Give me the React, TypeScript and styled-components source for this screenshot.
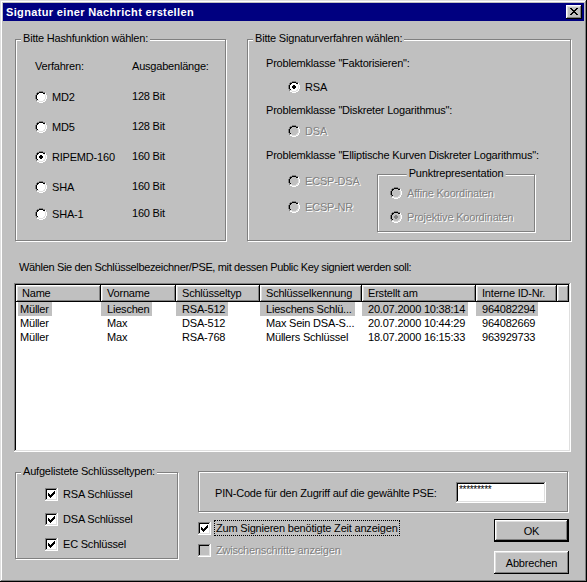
import styled, { createGlobalStyle, css } from "styled-components";

const FACE = "#c0c0c0";

const GlobalStyle = createGlobalStyle`
  * { box-sizing: border-box; }
  html, body { margin: 0; padding: 0; background: ${FACE}; }
  body {
    font-family: "Liberation Sans", Arial, sans-serif;
    font-size: 11px;
    line-height: 14px;
    letter-spacing: -0.2px;
    color: #000;
  }
`;

const raised = css`
  box-shadow: inset -1px -1px #000, inset 1px 1px #fff, inset -2px -2px #808080,
    inset 2px 2px #dfdfdf;
`;

const sunken = css`
  box-shadow: inset -1px -1px #fff, inset 1px 1px #808080, inset -2px -2px #dfdfdf,
    inset 2px 2px #000;
`;

const Window = styled.div`
  width: 587px;
  height: 582px;
  padding: 3px;
  background: ${FACE};
  box-shadow: inset -1px -1px #000, inset 1px 1px #dfdfdf, inset -2px -2px #808080,
    inset 2px 2px #fff;
  display: flex;
  flex-direction: column;
`;

const TitleBar = styled.div`
  height: 18px;
  flex-shrink: 0;
  background: #000080;
  color: #fff;
  font-weight: bold;
  letter-spacing: 0.35px;
  display: flex;
  align-items: center;
  padding: 0 2px 0 3px;
`;

const TitleText = styled.span`
  flex: 1;
  white-space: nowrap;
`;

const CloseButton = styled.div`
  width: 16px;
  height: 14px;
  background: ${FACE};
  ${raised};
  padding: 3px 0 0 4px;
`;

const Pix = styled.svg`
  display: block;
  flex-shrink: 0;
`;

function PixelArt({ map, colors }: { map: string[]; colors: Record<string, string> }) {
  const w = map[0].length;
  const h = map.length;
  return (
    <Pix width={w} height={h} viewBox={`0 0 ${w} ${h}`} shapeRendering="crispEdges">
      {map.flatMap((row, y) =>
        [...row].map((c, x) =>
          colors[c] ? (
            <rect key={`${x}-${y}`} x={x} y={y} width={1} height={1} fill={colors[c]} />
          ) : null
        )
      )}
    </Pix>
  );
}

const CLOSE_X = [
  "KK....KK",
  ".KK..KK.",
  "..KKKK..",
  "...KK...",
  "..KKKK..",
  ".KK..KK.",
  "KK....KK",
];

const RADIO_MAP = [
  "....GGGG....",
  "..GGKKKKGG..",
  ".GKKFFFFKKW.",
  ".GKFFFFFFLW.",
  "GKFFFDDFFFLW",
  "GKFFDDDDFFLW",
  "GKFFDDDDFFLW",
  "GKFFFDDFFFLW",
  ".GKFFFFFFLW.",
  ".GLLFFFFLLW.",
  "..WWLLLLWW..",
  "....WWWW....",
];

// 13x13 sunken check box with the classic 7x7 tick
const CHECK_MAP = (() => {
  const rows: string[][] = [];
  for (let y = 0; y < 13; y++) {
    const r: string[] = [];
    for (let x = 0; x < 13; x++) {
      if (x === 12 || y === 12) r.push("W");
      else if (x === 0 || y === 0) r.push("G");
      else if (x === 11 || y === 11) r.push("L");
      else if (x === 1 || y === 1) r.push("K");
      else r.push("F");
    }
    rows.push(r);
  }
  const tick: [number, number][] = [[3, 5], [4, 6], [5, 7], [6, 6], [7, 5], [8, 4], [9, 3]];
  tick.forEach(([x, y0]) => {
    for (let y = y0; y < y0 + 3; y++) rows[y][x] = "C";
  });
  return rows.map((r) => r.join(""));
})();

const Label = styled.span<{ $disabled?: boolean }>`
  white-space: nowrap;
  ${(p) =>
    p.$disabled &&
    css`
      color: #808080;
      text-shadow: 1px 1px 0 #fff;
    `}
`;

const Option = styled.div<{ $gap?: number }>`
  display: flex;
  align-items: center;
  gap: ${(p) => p.$gap ?? 5}px;
  height: 14px;
`;

function Radio({ label, checked, disabled }: { label: string; checked?: boolean; disabled?: boolean }) {
  const fill = disabled ? FACE : "#fff";
  const dot = checked ? (disabled ? "#808080" : "#000") : fill;
  return (
    <Option>
      <PixelArt
        map={RADIO_MAP}
        colors={{ G: "#808080", K: "#000", L: "#dfdfdf", W: "#fff", F: fill, D: dot }}
      />
      <Label $disabled={disabled}>{label}</Label>
    </Option>
  );
}

function Check({ checked, disabled }: { checked?: boolean; disabled?: boolean }) {
  const fill = disabled ? FACE : "#fff";
  return (
    <PixelArt
      map={CHECK_MAP}
      colors={{ G: "#808080", K: "#000", L: "#dfdfdf", W: "#fff", F: fill, C: checked ? "#000" : fill }}
    />
  );
}

const Body = styled.div`
  display: flex;
  flex-direction: column;
  flex: 1;
`;

const GroupBox = styled.div<{ $w: number; $h: number; $top?: number }>`
  position: relative;
  flex-shrink: 0;
  width: ${(p) => p.$w}px;
  height: ${(p) => p.$h}px;
  margin-top: ${(p) => p.$top ?? 0}px;
  border: 1px solid #808080;
  box-shadow: inset 1px 1px #fff, 1px 1px #fff;
`;

const Legend = styled.span<{ $center?: boolean }>`
  position: absolute;
  top: -8px;
  left: 5px;
  padding: 0 2px;
  background: ${FACE};
  line-height: 13px;
  white-space: nowrap;
  ${(p) =>
    p.$center &&
    css`
      left: 50%;
      transform: translateX(-50%);
    `}
`;

const TopRow = styled.div`
  display: flex;
  gap: 21px;
  margin: 18px 0 0 12px;
`;

const HashGrid = styled.div`
  display: grid;
  grid-template-columns: 97px auto;
  grid-template-rows: 31px 30px 30px 30px 27px 14px;
  align-items: start;
  padding: 19px 0 0 19px;
`;

const BitText = styled.span`
  display: block;
  margin-top: -1px;
`;

const SigStack = styled.div`
  display: grid;
  grid-template-rows: 24px 23px 21px 24px 26px auto;
  align-items: start;
  padding: 16px 0 0 18px;
`;

const Indented = styled.div`
  padding-left: 22px;
`;

const EcRow = styled.div`
  display: flex;
`;

const EcRadios = styled.div`
  width: 111px;
  padding-left: 22px;
  display: flex;
  flex-direction: column;
  gap: 12px;
`;

const PunktStack = styled.div`
  display: flex;
  flex-direction: column;
  gap: 10px;
  padding: 11px 0 0 12px;
`;

const Prompt = styled.div`
  margin: 19px 0 0 16px;
  height: 14px;
  white-space: nowrap;
  letter-spacing: -0.35px;
`;

const ListView = styled.div`
  margin: 9px 0 0 11px;
  width: 557px;
  height: 169px;
  padding: 2px;
  background: #fff;
  ${sunken};
`;

const COLS = "85px 75px 84px 102px 114px 81px 1fr";

const HeaderRow = styled.div`
  display: grid;
  grid-template-columns: ${COLS};
  height: 17px;
`;

const HeaderCell = styled.div`
  background: ${FACE};
  ${raised};
  padding-left: 6px;
  line-height: 16px;
  white-space: nowrap;
  overflow: hidden;
`;

const ItemRow = styled.div`
  display: grid;
  grid-template-columns: ${COLS};
  height: 14px;
  line-height: 14px;
`;

const Cell = styled.div`
  white-space: nowrap;
  overflow: hidden;
`;

const CellText = styled.span<{ $first?: boolean; $selected?: boolean }>`
  display: inline-block;
  padding: ${(p) => (p.$first ? "0 3px 0 2px" : "0 3px 0 6px")};
  margin-left: ${(p) => (p.$first ? 2 : 0)}px;
  background: ${(p) => (p.$selected ? FACE : "transparent")};
`;

const BottomRow = styled.div`
  display: flex;
  gap: 20px;
  margin: 19px 0 0 12px;
`;

const TypesStack = styled.div`
  display: flex;
  flex-direction: column;
  gap: 11px;
  padding: 14px 0 0 29px;
`;

const RightCol = styled.div`
  width: 371px;
  display: flex;
  flex-direction: column;
`;

const PinFrame = styled.div`
  width: 370px;
  height: 41px;
  border: 1px solid #808080;
  box-shadow: inset 1px 1px #fff, 1px 1px #fff;
  display: flex;
  align-items: center;
  padding: 2px 0 0 16px;
`;

const PinField = styled.div`
  width: 90px;
  height: 21px;
  margin: 0 21px 0 auto;
  padding: 2px 3px;
  background: #fff;
  ${sunken};
  font-size: 10px;
  line-height: 12px;
  letter-spacing: -0.3px;
`;

const LowerRow = styled.div`
  display: flex;
  justify-content: space-between;
`;

const OptionsStack = styled.div`
  display: flex;
  flex-direction: column;
  gap: 8px;
  padding-top: 9px;
`;

const FocusLabel = styled.span`
  border: 1px dotted #000;
  padding: 0 1px;
  line-height: 14px;
  white-space: nowrap;
`;

const ButtonStack = styled.div`
  display: flex;
  flex-direction: column;
  gap: 9px;
  padding-top: 7px;
`;

const Button = styled.div<{ $default?: boolean }>`
  width: 75px;
  height: 23px;
  display: flex;
  align-items: center;
  justify-content: center;
  background: ${FACE};
  ${(p) =>
    p.$default
      ? css`
          box-shadow: inset 0 0 0 1px #000, inset -2px -2px #000, inset 2px 2px #fff,
            inset -3px -3px #808080, inset 3px 3px #dfdfdf;
        `
      : raised};
`;

const hashRows = [
  { name: "MD2", bits: "128 Bit" },
  { name: "MD5", bits: "128 Bit" },
  { name: "RIPEMD-160", bits: "160 Bit", checked: true },
  { name: "SHA", bits: "160 Bit" },
  { name: "SHA-1", bits: "160 Bit" },
];

const columns = ["Name", "Vorname", "Schlüsseltyp", "Schlüsselkennung", "Erstellt am", "Interne ID-Nr."];

const keys = [
  ["Müller", "Lieschen", "RSA-512", "Lieschens Schlü...", "20.07.2000 10:38:14", "964082294"],
  ["Müller", "Max", "DSA-512", "Max Sein DSA-S...", "20.07.2000 10:44:29", "964082669"],
  ["Müller", "Max", "RSA-768", "Müllers Schlüssel", "18.07.2000 16:15:33", "963929733"],
];

export default function App() {
  return (
    <>
      <GlobalStyle />
      <Window>
        <TitleBar>
          <TitleText>Signatur einer Nachricht erstellen</TitleText>
          <CloseButton>
            <PixelArt map={CLOSE_X} colors={{ K: "#000" }} />
          </CloseButton>
        </TitleBar>
        <Body>
          <TopRow>
            <GroupBox $w={211} $h={202}>
              <Legend>Bitte Hashfunktion wählen:</Legend>
              <HashGrid>
                <span>Verfahren:</span>
                <span>Ausgabenlänge:</span>
                {hashRows.map((r) => [
                  <Radio key={r.name} label={r.name} checked={r.checked} />,
                  <BitText key={r.name + "b"}>{r.bits}</BitText>,
                ])}
              </HashGrid>
            </GroupBox>
            <GroupBox $w={324} $h={202}>
              <Legend>Bitte Signaturverfahren wählen:</Legend>
              <SigStack>
                <span>Problemklasse "Faktorisieren":</span>
                <Indented>
                  <Radio label="RSA" checked />
                </Indented>
                <span>Problemklasse "Diskreter Logarithmus":</span>
                <Indented>
                  <Radio label="DSA" disabled />
                </Indented>
                <span>Problemklasse "Elliptische Kurven Diskreter Logarithmus":</span>
                <EcRow>
                  <EcRadios>
                    <Radio label="ECSP-DSA" disabled />
                    <Radio label="ECSP-NR" disabled />
                  </EcRadios>
                  <GroupBox $w={158} $h={58}>
                    <Legend $center>Punktrepresentation</Legend>
                    <PunktStack>
                      <Radio label="Affine Koordinaten" disabled />
                      <Radio label="Projektive Koordinaten" checked disabled />
                    </PunktStack>
                  </GroupBox>
                </EcRow>
              </SigStack>
            </GroupBox>
          </TopRow>

          <Prompt>Wählen Sie den Schlüsselbezeichner/PSE, mit dessen Public Key signiert werden soll:</Prompt>

          <ListView>
            <HeaderRow>
              {columns.map((c) => (
                <HeaderCell key={c}>{c}</HeaderCell>
              ))}
              <HeaderCell />
            </HeaderRow>
            {keys.map((row, i) => (
              <ItemRow key={row[5]}>
                {row.map((v, j) => (
                  <Cell key={j}>
                    <CellText $first={j === 0} $selected={i === 0}>
                      {v}
                    </CellText>
                  </Cell>
                ))}
              </ItemRow>
            ))}
          </ListView>

          <BottomRow>
            <GroupBox $w={163} $h={87} $top={1}>
              <Legend>Aufgelistete Schlüsseltypen:</Legend>
              <TypesStack>
                <Option>
                  <Check checked />
                  <Label>RSA Schlüssel</Label>
                </Option>
                <Option>
                  <Check checked />
                  <Label>DSA Schlüssel</Label>
                </Option>
                <Option>
                  <Check checked />
                  <Label>EC Schlüssel</Label>
                </Option>
              </TypesStack>
            </GroupBox>
            <RightCol>
              <PinFrame>
                <span>PIN-Code für den Zugriff auf die gewählte PSE:</span>
                <PinField>*********</PinField>
              </PinFrame>
              <LowerRow>
                <OptionsStack>
                  <Option $gap={3}>
                    <Check checked />
                    <FocusLabel>Zum Signieren benötigte Zeit anzeigen</FocusLabel>
                  </Option>
                  <Option>
                    <Check disabled />
                    <Label $disabled>Zwischenschritte anzeigen</Label>
                  </Option>
                </OptionsStack>
                <ButtonStack>
                  <Button $default>OK</Button>
                  <Button>Abbrechen</Button>
                </ButtonStack>
              </LowerRow>
            </RightCol>
          </BottomRow>
        </Body>
      </Window>
    </>
  );
}
